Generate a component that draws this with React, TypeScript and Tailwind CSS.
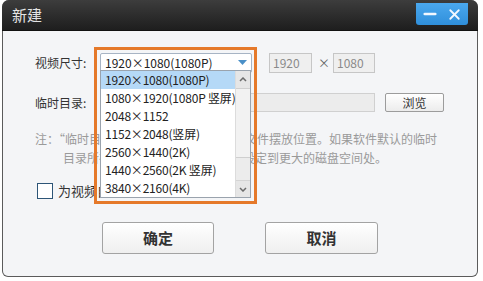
import { Minus, X } from 'lucide-react';

const sizes = [
  '1920×1080(1080P)',
  '1080×1920(1080P 竖屏)',
  '2048×1152',
  '1152×2048(竖屏)',
  '2560×1440(2K)',
  '1440×2560(2K 竖屏)',
  '3840×2160(4K)',
];

function SizeDropdown() {
  return (
    <div className="relative h-[20px] w-[152px]">
      {/* select box */}
      <div className="flex h-[20px] w-[152px] items-center rounded-[2px] border border-[#a7b4c4] bg-white pl-[4px] text-[12px] text-[#222]">
        <span className="flex-1 whitespace-nowrap">{sizes[0]}</span>
        <svg width="9" height="6" viewBox="0 0 9 6" className="mr-[4px]">
          <polygon points="0,0 9,0 4.5,5" fill="#4a90c8" />
        </svg>
      </div>

      {/* opened list */}
      <div className="absolute left-0 top-[17px] z-10 flex h-[128px] w-[151px] border border-[#9aa3ad] bg-white">
        <div className="relative z-10 flex min-w-0 flex-1 flex-col">
          {sizes.map((s, i) => (
            <div
              key={i}
              className={
                i === 0
                  ? 'flex h-[18px] items-center whitespace-nowrap bg-[#b5d9f7] pl-[4px] text-[12px] tracking-[-0.2px] text-[#222]'
                  : 'flex h-[18px] items-center whitespace-nowrap pl-[4px] text-[12px] tracking-[-0.2px] text-[#222]'
              }
            >
              {s}
            </div>
          ))}
        </div>
        <div className="flex w-[15px] shrink-0 flex-col border-l border-[#dcdcdc] bg-[#ececec]">
          <div className="flex h-[17px] items-center justify-center bg-[#e6e6e6]">
            <svg width="8" height="5" viewBox="0 0 8 5">
              <polyline points="1,4 4,1 7,4" fill="none" stroke="#6b6b6b" strokeWidth="1.5" />
            </svg>
          </div>
          <div className="h-[70px] border-y border-[#cfcfcf] bg-[#f2f2f2]" />
          <div className="flex-1" />
          <div className="flex h-[17px] items-center justify-center border-t border-[#d4d4d4] bg-[#e6e6e6]">
            <svg width="8" height="5" viewBox="0 0 8 5">
              <polyline points="1,1 4,4 7,1" fill="none" stroke="#6b6b6b" strokeWidth="1.5" />
            </svg>
          </div>
        </div>
      </div>

      {/* highlight frame around the dropdown */}
      <div className="pointer-events-none absolute left-[-6px] top-[-6px] z-20 h-[157px] w-[163px] border-[3px] border-[#e5792a]" />
    </div>
  );
}

function App() {
  return (
    <div
      className="h-[281px] w-[483px] bg-white pl-[2px]"
      style={{ fontFamily: '"Noto Sans CJK SC", "Noto Sans", sans-serif' }}
    >
      <div className="flex h-[277px] w-[476px] flex-col overflow-hidden rounded-t-[7px] rounded-b-[6px] bg-[#5b5b5b]">
        {/* title bar */}
        <div className="flex h-[31px] items-start justify-between border-b border-[#111] bg-gradient-to-b from-[#3d3d3d] to-[#1e1e1e]">
          <span className="mt-[5px] pl-[10px] text-[15px] leading-[20px] text-[#e4e4e4]">新建</span>
          <div className="mr-[10px] mt-[3px] flex h-[22px] w-[52px] items-center justify-around rounded-b-[3px] bg-gradient-to-b from-[#4aa8ee] to-[#2f8fdb] px-[2px]">
            <Minus size={18} strokeWidth={3.5} color="#f2f8ff" />
            <X size={17} strokeWidth={2.5} color="#f2f8ff" />
          </div>
        </div>

        {/* body */}
        <div className="mx-[1px] mb-[1px] flex flex-1 flex-col rounded-b-[5px] bg-[#f4f5f7] pl-[32px] text-[12px] text-[#333]">
          <div className="mt-[22px] flex h-[20px] items-center">
            <span className="w-[65px]">视频尺寸:</span>
            <SizeDropdown />
            <div className="ml-[17px] flex h-[20px] w-[43px] items-center border border-[#c6c6c6] bg-[#efefef] pl-[3px] text-[#8a8a8a]">
              1920
            </div>
            <span className="ml-[6px] w-[11px] text-[#666]">×</span>
            <div className="ml-[4px] flex h-[20px] w-[42px] items-center border border-[#c6c6c6] bg-[#efefef] pl-[3px] text-[#8a8a8a]">
              1080
            </div>
          </div>

          <div className="mt-[20px] flex h-[19px] items-center">
            <span className="w-[65px]">临时目录:</span>
            <div className="h-[19px] w-[275px] border border-[#d0d0d0] bg-[#ececec]" />
            <div className="ml-[10px] flex h-[19px] w-[59px] items-center justify-center rounded-[2px] border border-[#9c9c9c] bg-gradient-to-b from-white to-[#ececec] text-[#333]">
              浏览
            </div>
          </div>

          <div className="mt-[17px] flex flex-col leading-[19px] text-[#9a9a9a]">
            <span className="whitespace-nowrap">注：“临时目录”是指导出视频时的临时文件摆放位置。如果软件默认的临时</span>
            <span className="whitespace-nowrap pl-[28px]">目录所在的磁盘空间不足，建议您设定到更大的磁盘空间处。</span>
          </div>

          <div className="mt-[16px] flex h-[16px] items-center">
            <div className="ml-[2px] h-[16px] w-[16px] border border-[#2d5577] bg-white" />
            <span className="ml-[5px] text-[13px] leading-[14px] text-[#333]">为视频自动加字幕</span>
          </div>

          <div className="mt-[23px] flex pl-[67px]">
            <div className="flex h-[32px] w-[112px] items-center justify-center rounded-[3px] border border-[#a3a3a3] bg-gradient-to-b from-white to-[#efefef] text-[15px] font-bold text-[#333]">
              确定
            </div>
            <div className="ml-[51px] flex h-[32px] w-[113px] items-center justify-center rounded-[3px] border border-[#a3a3a3] bg-gradient-to-b from-white to-[#efefef] text-[15px] font-bold text-[#333]">
              取消
            </div>
          </div>
        </div>
      </div>
    </div>
  );
}

export default App;
